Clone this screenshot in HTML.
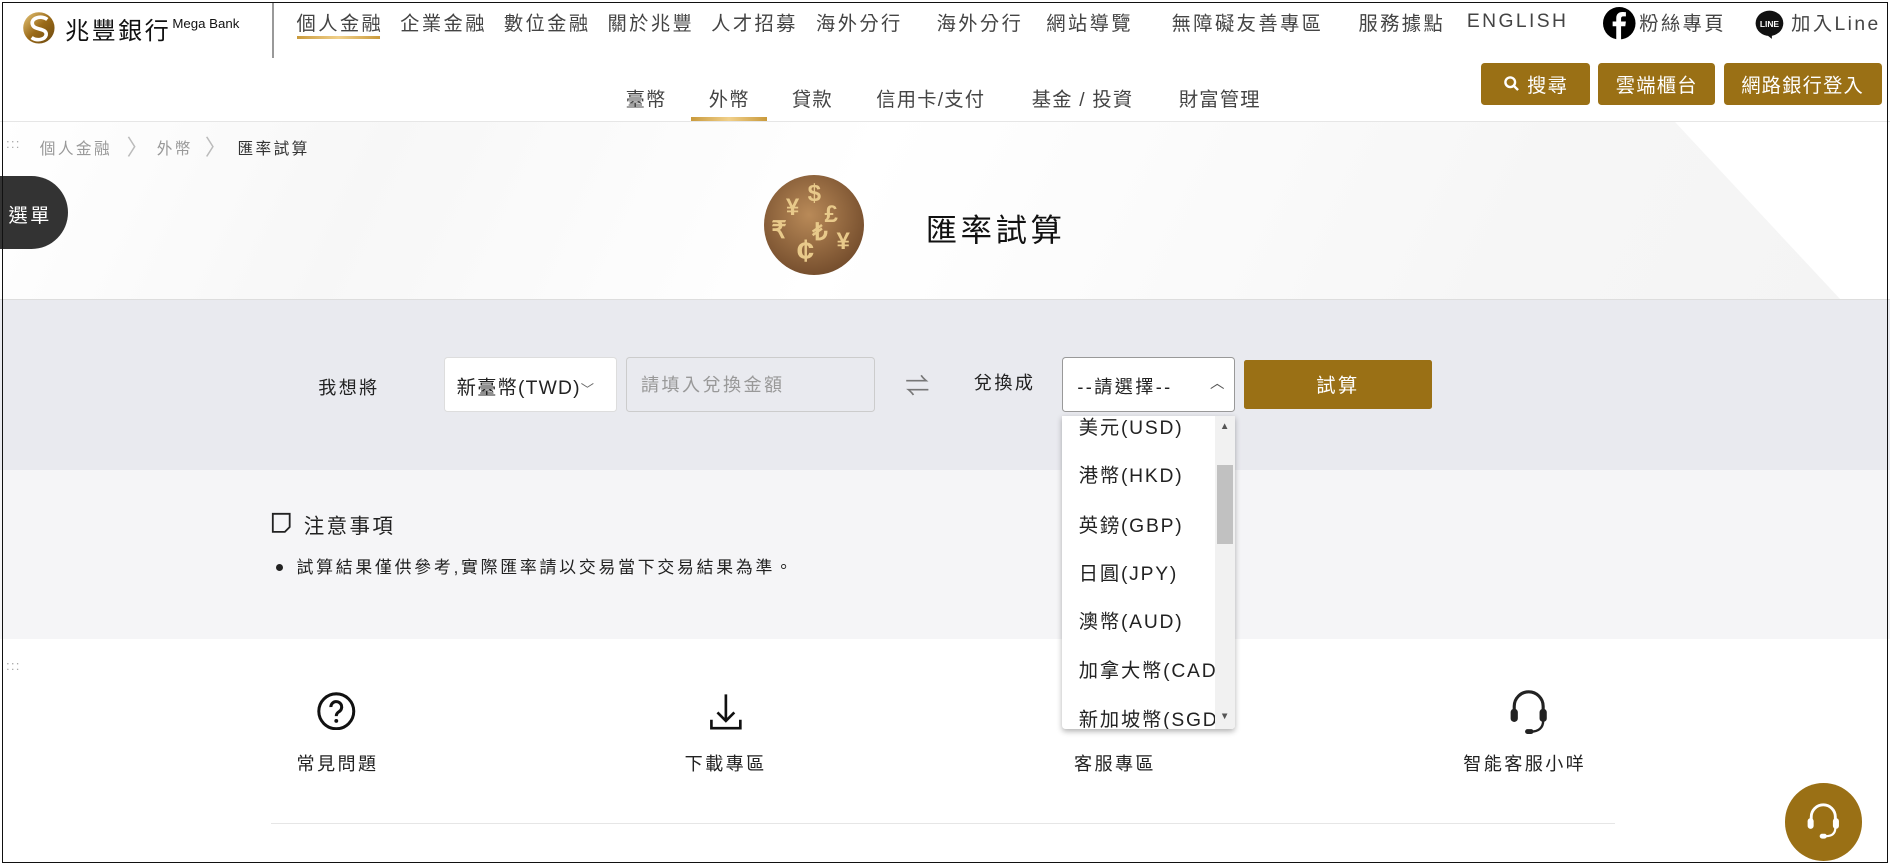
<!DOCTYPE html>
<html><head><meta charset="utf-8"><style>
*{margin:0;padding:0;box-sizing:border-box}
html,body{width:1890px;height:864px;overflow:hidden;background:#fff}
#w{zoom:1.20536;width:1568px;height:718px;position:relative;font-family:"Liberation Sans","Noto Sans CJK TC",sans-serif;color:#222;overflow:hidden}
.a{position:absolute;white-space:nowrap}
.nav{font-size:16px;letter-spacing:2px;color:#444;top:7px}
.sub{font-size:16px;letter-spacing:1px;color:#444;top:70px}
.btn{position:absolute;top:52px;height:35px;background:#9a7015;color:#fff;border-radius:3px;font-size:16px;letter-spacing:1px;display:flex;align-items:center;justify-content:center}
.opt{position:absolute;left:14px;font-size:16px;letter-spacing:1.5px;color:#222}
.lbl{font-size:15px;letter-spacing:2px;color:#222}
</style></head><body><div id="w">
<div class="a" style="left:2px;top:2px;width:1564px;height:714px;border:1.5px solid #111;z-index:50;pointer-events:none"></div>

<svg class="a" style="left:18px;top:9px" width="28" height="28" viewBox="0 0 28 28"><defs><linearGradient id="g" x1="0" y1="0" x2="1" y2="1"><stop offset="0" stop-color="#e8c77a"/><stop offset=".5" stop-color="#9a6a18"/><stop offset="1" stop-color="#6b4810"/></linearGradient></defs><circle cx="14" cy="14" r="13" fill="url(#g)"/><path d="M21 7C16 3 6 6 9 12c2 4 12 2 11 8-1 4-8 5-12 2" stroke="#fff" stroke-width="3" fill="none"/></svg>
<div class="a" style="left:54px;top:9px;font-size:20px;letter-spacing:2px;color:#111">兆豐銀行</div>
<div class="a" style="left:143px;top:13px;font-size:11px;color:#111">Mega Bank</div>
<div class="a" style="left:226px;top:2px;width:1px;height:46px;background:#999"></div>

<div class="a nav" style="left:246px">個人金融</div>
<div class="a" style="left:246px;top:30px;width:69px;height:2px;background:linear-gradient(90deg,#c99a3c,#f1d08a,#c99a3c)"></div>
<div class="a nav" style="left:332px">企業金融</div>
<div class="a nav" style="left:418px">數位金融</div>
<div class="a nav" style="left:504px">關於兆豐</div>
<div class="a nav" style="left:590px">人才招募</div>
<div class="a nav" style="left:677px">海外分行</div>
<div class="a nav" style="left:777px">海外分行</div>
<div class="a nav" style="left:868px">網站導覽</div>
<div class="a nav" style="left:972px">無障礙友善專區</div>
<div class="a nav" style="left:1127px">服務據點</div>
<div class="a nav" style="left:1217px;top:9px">ENGLISH</div>
<svg class="a" style="left:1330px;top:6px" width="27" height="27" viewBox="0 0 27 27"><circle cx="13.5" cy="13.5" r="13.5" fill="#000"/><path d="M15 27V16h3.5l.5-4h-4V9.5c0-1 .5-1.7 1.8-1.7H19V4.3c-.5 0-1.7-.2-3-.2-3 0-5 1.8-5 5V12H8v4h3v11z" fill="#fff"/></svg>
<div class="a nav" style="left:1360px">粉絲專頁</div>
<svg class="a" style="left:1456px;top:8px" width="24" height="25" viewBox="0 0 24 25"><ellipse cx="12" cy="11" rx="11.5" ry="10.5" fill="#111"/><path d="M9 20l5 4v-4z" fill="#111"/><text x="12" y="14" font-size="7" font-family="Liberation Sans" font-weight="bold" fill="#fff" text-anchor="middle">LINE</text></svg>
<div class="a nav" style="left:1486px">加入Line</div>

<div class="a sub" style="left:519px">臺幣</div>
<div class="a sub" style="left:588px">外幣</div>
<div class="a" style="left:573px;top:97px;width:63px;height:3px;background:linear-gradient(90deg,#c99a3c,#f1d08a,#c99a3c)"></div>
<div class="a sub" style="left:657px">貸款</div>
<div class="a sub" style="left:727px">信用卡/支付</div>
<div class="a sub" style="left:856px">基金 / 投資</div>
<div class="a sub" style="left:978px">財富管理</div>

<div class="btn" style="left:1229px;width:90px"><svg width="14" height="14" viewBox="0 0 14 14" style="margin-right:6px"><circle cx="6" cy="6" r="4" stroke="#fff" stroke-width="2" fill="none"/><path d="M9 9l3.5 3.5" stroke="#fff" stroke-width="2"/></svg>搜尋</div>
<div class="btn" style="left:1326px;width:97px">雲端櫃台</div>
<div class="btn" style="left:1430px;width:131px">網路銀行登入</div>

<div class="a" style="left:0;top:100px;width:1568px;height:1px;background:#e6e6e6"></div>

<div class="a" style="left:0;top:101px;width:1568px;height:148px;background:linear-gradient(115deg,#fff 0%,#f7f7f7 20%,#fff 45%,#f6f6f6 80%,#f4f4f4 100%);overflow:hidden">
<div class="a" style="left:1390px;top:0;width:400px;height:148px;background:#fff;transform:skewX(43deg);transform-origin:0 0"></div>
</div>
<div class="a" style="left:0;top:248px;width:1568px;height:1px;background:#ddd"></div>
<div class="a" style="left:5px;top:113px;font-size:11px;color:#aaa;letter-spacing:1px">:::</div>
<div class="a" style="left:33px;top:113px;font-size:13px;color:#999;letter-spacing:2px">個人金融</div>
<div class="a" style="left:105px;top:109px;font-size:18px;color:#bbb">〉</div>
<div class="a" style="left:130px;top:113px;font-size:13px;color:#999;letter-spacing:2px">外幣</div>
<div class="a" style="left:170px;top:109px;font-size:18px;color:#bbb">〉</div>
<div class="a" style="left:197px;top:113px;font-size:13px;color:#333;letter-spacing:2px">匯率試算</div>
<div class="a" style="left:0;top:146px;width:56px;height:61px;background:#333;border-radius:0 31px 31px 0;color:#fff;font-size:16px;letter-spacing:2px;padding:20px 0 0 7px">選單</div>
<div class="a" style="left:634px;top:145px;width:83px;height:83px;border-radius:50%;background:radial-gradient(circle at 45% 40%,#b98a58,#7a5230 70%,#5e3f22);overflow:hidden;color:#e8c98a;font-size:20px;font-weight:bold">
<span class="a" style="left:36px;top:4px">$</span><span class="a" style="left:18px;top:16px">¥</span><span class="a" style="left:50px;top:22px">£</span><span class="a" style="left:6px;top:34px">₹</span><span class="a" style="left:40px;top:36px">₺</span><span class="a" style="left:27px;top:48px;font-size:26px">¢</span><span class="a" style="left:60px;top:44px">¥</span></div>
<div class="a" style="left:768px;top:171px;font-size:26px;letter-spacing:3px;color:#111">匯率試算</div>

<div class="a" style="left:0;top:249px;width:1568px;height:141px;background:#e9eaef"></div>
<div class="a lbl" style="left:264px;top:310px">我想將</div>
<div class="a" style="left:368px;top:296px;width:144px;height:46px;background:#fff;border:1px solid #ddd;border-radius:3px;font-size:16px;letter-spacing:1px;padding:12px 0 0 10px">新臺幣(TWD)<span style="font-size:11px;color:#666">﹀</span></div>
<div class="a" style="left:519px;top:296px;width:207px;height:46px;background:#e9eaef;border:1px solid #ccc;border-radius:3px;font-size:15px;letter-spacing:2px;color:#999;padding:11px 0 0 12px">請填入兌換金額</div>
<div class="a" style="left:751px;top:304px;font-size:20px;color:#777">⇌</div>
<div class="a lbl" style="left:808px;top:306px">兌換成</div>
<div class="a" style="left:881px;top:296px;width:144px;height:46px;background:#fff;border:1px solid #999;border-radius:3px;font-size:15px;letter-spacing:2px;padding:13px 0 0 12px">--請選擇--<span class="a" style="left:122px;top:12px;font-size:12px;color:#555">︿</span></div>
<div class="a" style="left:1032px;top:299px;width:156px;height:40px;background:#9a7015;border-radius:2px;color:#fff;font-size:16px;letter-spacing:2px;text-align:center;padding-top:8px">試算</div>

<div class="a" style="left:0;top:390px;width:1568px;height:140px;background:#f5f5f7"></div>
<svg class="a" style="left:225px;top:425px" width="17" height="18" viewBox="0 0 17 18"><path d="M1.5 1.5h14v11l-4 4H1.5z" stroke="#222" stroke-width="1.5" fill="none"/></svg>
<div class="a" style="left:252px;top:422px;font-size:17px;letter-spacing:2px;color:#222">注意事項</div>
<div class="a" style="left:229px;top:468px;width:6px;height:6px;border-radius:50%;background:#222"></div>
<div class="a" style="left:246px;top:459px;font-size:14px;letter-spacing:2.3px;color:#222">試算結果僅供參考,實際匯率請以交易當下交易結果為準。</div>

<div class="a" style="left:5px;top:546px;font-size:11px;color:#aaa;letter-spacing:1px">:::</div>
<svg class="a" style="left:263px;top:574px" width="32" height="32" viewBox="0 0 32 32"><circle cx="16" cy="16" r="14.5" stroke="#111" stroke-width="2.5" fill="none"/><path d="M11.5 12.5a4.5 4.5 0 1 1 6.5 4c-1.5 1-2 2-2 3.5" stroke="#111" stroke-width="2.5" fill="none"/><circle cx="16" cy="24" r="1.6" fill="#111"/></svg>
<svg class="a" style="left:588px;top:574px" width="28" height="32" viewBox="0 0 28 32"><path d="M14 2v22M7 17l7 7 7-7M2 23v7h24v-7" stroke="#111" stroke-width="2.2" fill="none"/></svg>
<svg class="a" style="left:1250px;top:570px" width="36" height="42" viewBox="0 0 36 42"><path d="M6 22V16a12 12 0 0 1 24 0v6" stroke="#222" stroke-width="2.6" fill="none"/><rect x="3" y="18" width="6" height="11" rx="3" fill="#222"/><rect x="27" y="18" width="6" height="11" rx="3" fill="#222"/><path d="M30 28c0 6-4 9-10 9" stroke="#222" stroke-width="2" fill="none"/><rect x="15" y="35" width="7" height="4" rx="2" fill="#222"/></svg>
<div class="a lbl" style="left:246px;top:622px">常見問題</div>
<div class="a lbl" style="left:568px;top:622px">下載專區</div>
<div class="a lbl" style="left:891px;top:622px">客服專區</div>
<div class="a lbl" style="left:1214px;top:622px">智能客服小咩</div>
<div class="a" style="left:225px;top:683px;width:1115px;height:1px;background:#e6e6e6"></div>
<div class="a" style="left:1481px;top:650px;width:64px;height:64px;border-radius:50%;background:#9a7015"></div>
<svg class="a" style="left:1497px;top:664px" width="32" height="36" viewBox="0 0 32 36"><path d="M6 19v-5a10 10 0 0 1 20 0v5" stroke="#fff" stroke-width="2.4" fill="none"/><rect x="3" y="15" width="5" height="9" rx="2.5" fill="#fff"/><rect x="24" y="15" width="5" height="9" rx="2.5" fill="#fff"/><path d="M26 23c0 5-3 7-8 7" stroke="#fff" stroke-width="1.8" fill="none"/><rect x="13" y="28" width="6" height="4" rx="2" fill="#fff"/></svg>

<div class="a" style="left:881px;top:345px;width:144px;height:260px;background:#fff;box-shadow:0 2px 5px rgba(0,0,0,.3);border-radius:0 0 3px 3px;overflow:hidden;z-index:10">
<div class="opt" style="top:-3px">美元(USD)</div>
<div class="opt" style="top:37px">港幣(HKD)</div>
<div class="opt" style="top:78px">英鎊(GBP)</div>
<div class="opt" style="top:118px">日圓(JPY)</div>
<div class="opt" style="top:158px">澳幣(AUD)</div>
<div class="opt" style="top:198px">加拿大幣(CAD)</div>
<div class="opt" style="top:239px">新加坡幣(SGD)</div>
<div class="a" style="left:127px;top:0;width:17px;height:260px;background:#f1f1f1"></div>
<div class="a" style="left:129px;top:41px;width:13px;height:65px;background:#c1c1c1"></div>
<div class="a" style="left:131px;top:4px;font-size:8px;color:#555">▲</div>
<div class="a" style="left:131px;top:245px;font-size:8px;color:#555">▼</div>
</div>
</div></body></html>
